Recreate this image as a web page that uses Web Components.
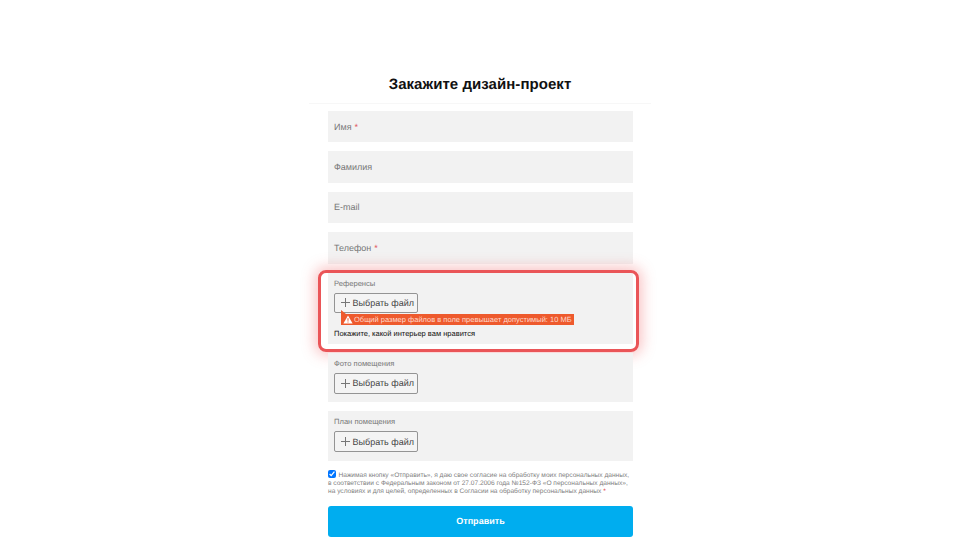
<!DOCTYPE html>
<html>
<head>
<meta charset="utf-8">
<style>
  html, body { margin: 0; height: 543px; overflow: hidden; background: #fff; font-family: "Liberation Sans", Arial, sans-serif; text-rendering: geometricPrecision; }
</style>
</head>
<body>
<order-form>
  <text-field req>Имя</text-field>
  <text-field>Фамилия</text-field>
  <text-field>E-mail</text-field>
  <text-field req>Телефон</text-field>
  <file-field label="Референсы" error="Общий размер файлов в поле превышает допустимый: 10 МБ" hint="Покажите, какой интерьер вам нравится" marked></file-field>
  <file-field label="Фото помещения"></file-field>
  <file-field label="План помещения"></file-field>
  <consent-box></consent-box>
</order-form>
<script>
class OrderForm extends HTMLElement {
  constructor() {
    super();
    this.attachShadow({mode: 'open'});
  }
  connectedCallback() {
    this.shadowRoot.innerHTML = `
      <style>
        :host { display: block; width: 960px; height: 543px; overflow: hidden; }
        .wrap { width: 342px; margin: 0 auto; padding-top: 76px; }
        h1 { margin: 0; height: 27px; font-size: 15px; line-height: 17px; font-weight: bold; letter-spacing: .05px; text-align: center; color: #111; border-bottom: 1px solid #f7f7f7; }
        .fields { display: flex; flex-direction: column; gap: 9px; padding: 7px 18px 0 19px; }
        button { display: block; width: 100%; height: 31.5px; border: 0; border-radius: 3px; background: #00adef; color: #fff; font: bold 9px "Liberation Sans", Arial, sans-serif; text-rendering: geometricPrecision; letter-spacing: .03px; }
      </style>
      <div class="wrap">
        <h1>Закажите дизайн-проект</h1>
        <div class="fields">
          <slot></slot>
          <button>Отправить</button>
        </div>
      </div>`;
  }
}

class TextField extends HTMLElement {
  constructor() {
    super();
    this.attachShadow({mode: 'open'});
  }
  connectedCallback() {
    this.shadowRoot.innerHTML = `
      <style>
        :host { display: flex; align-items: center; height: 31.4px; padding-left: 6px; background: #f2f2f2; font-size: 9px; color: #777; }
        i { font-style: normal; color: #e0535a; margin-left: 3px; }
      </style>
      <slot></slot>${this.hasAttribute('req') ? '<i>*</i>' : ''}`;
  }
}

class FileField extends HTMLElement {
  constructor() {
    super();
    this.attachShadow({mode: 'open'});
  }
  connectedCallback() {
    const error = this.getAttribute('error');
    const hint = this.getAttribute('hint');
    this.shadowRoot.innerHTML = `
      <style>
        :host { display: block; position: relative; padding: 6px 6px ${error ? '5px' : '8.6px'} 6px; background: #f2f2f2; }
        .label { font-size: 7.6px; line-height: 10px; color: #777; margin-bottom: 4px; }
        .pick { display: flex; align-items: center; box-sizing: border-box; width: 84px; height: 20.8px; padding-left: 5.5px; gap: 3px; border: 1px solid #949494; border-radius: 2px; background: #f4f4f4; font-size: 9px; color: #444; white-space: nowrap; }
        svg { display: block; flex: none; }
        .err { display: flex; align-items: center; position: relative; width: fit-content; height: 11.5px; margin: .6px 0 0 7px; padding: 0 2px; gap: 1px; background: #ee5a2d; color: #ffd9cc; font-size: 7.5px; white-space: nowrap; }
        .err:before { content: ""; position: absolute; left: 0; top: -4px; border-right: 5px solid transparent; border-bottom: 4px solid #ee5a2d; }
        .hint { font-size: 7.5px; line-height: 10px; color: #111; margin-top: 3.5px; }
        .frame { position: absolute; left: -10px; right: -6px; top: -2.3px; bottom: -8px; border: 3px solid #ea5558; border-radius: 8px; box-shadow: 0 0 14px 3px rgba(239,84,87,.35); pointer-events: none; }
      </style>
      <div class="label">${this.getAttribute('label')}</div>
      <div class="pick">
        <svg width="9" height="9" viewBox="0 0 9 9"><path d="M4.5 0v9M0 4.5h9" stroke="#777" stroke-width="1" fill="none"/></svg>
        <span>Выбрать файл</span>
      </div>
      ${error ? `<div class="err">
        <svg width="10" height="9" viewBox="0 0 10 9"><path d="M5 .5L9.6 8.5H.4z" fill="#fff"/><path d="M5 3.2v2.6M5 6.5v1" stroke="#ee5a2d" stroke-width="1" fill="none"/></svg>
        <span>${error}</span></div>` : ''}
      ${hint ? `<div class="hint">${hint}</div>` : ''}
      ${this.hasAttribute('marked') ? '<div class="frame"></div>' : ''}`;
  }
}

class ConsentBox extends HTMLElement {
  constructor() {
    super();
    this.attachShadow({mode: 'open'});
  }
  connectedCallback() {
    this.shadowRoot.innerHTML = `
      <style>
        :host { display: block; padding-top: .6px; font-size: 6.6px; line-height: 7.6px; color: #808080; padding-bottom: 1.4px; }
        input { width: 8px; height: 8px; margin: 0 2.5px 0 0; vertical-align: -1px; }
        i { font-style: normal; color: #e0353a; }
      </style>
      <input type="checkbox" checked>Нажимая кнопку «Отправить», я даю свое согласие на обработку моих персональных данных, в соответствии с Федеральным законом от 27.07.2006 года №152-ФЗ «О персональных данных», на условиях и для целей, определенных в Согласии на обработку персональных данных <i>*</i>`;
  }
}

customElements.define('order-form', OrderForm);
customElements.define('text-field', TextField);
customElements.define('file-field', FileField);
customElements.define('consent-box', ConsentBox);
</script>
</body>
</html>
